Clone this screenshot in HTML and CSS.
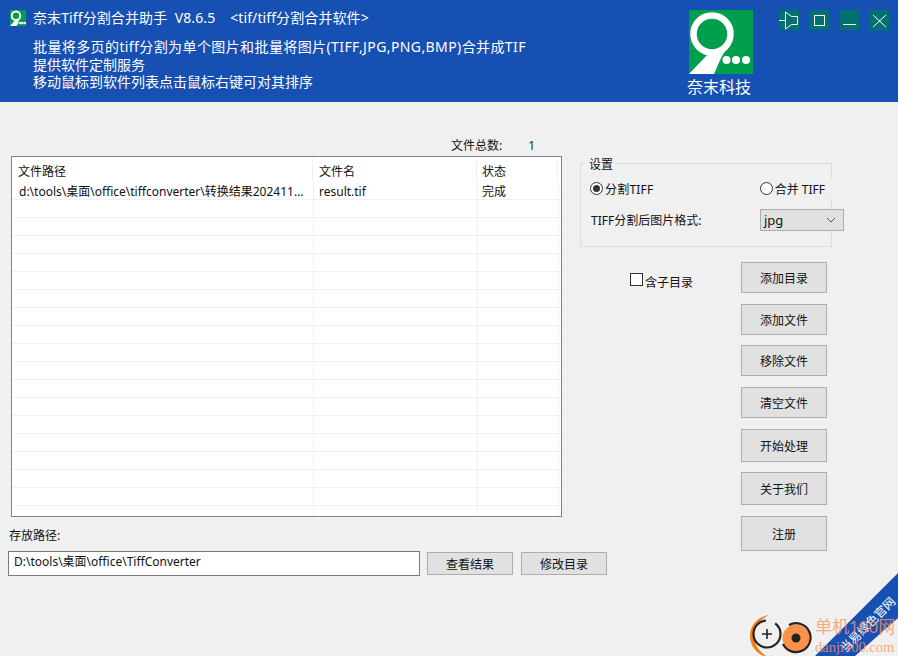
FILE: index.html
```html
<!DOCTYPE html>
<html lang="zh-CN">
<head>
<meta charset="utf-8">
<title>奈末Tiff分割合并助手</title>
<link rel="stylesheet" href="styles.css">
</head>
<body>
<div class="app">
  <header class="banner">
    <div class="intro">
      <div class="title-row">
        <svg class="app-icon" viewBox="0 0 64 64"><rect width="64" height="64" fill="#009e4d"/><circle cx="24" cy="23" r="17" fill="none" stroke="#fff" stroke-width="8"/><path d="M0 64 20 42 38 34 27 64Z" fill="#fff"/><circle cx="39" cy="52" r="5" fill="#fff"/><circle cx="49" cy="52" r="5" fill="#fff"/><circle cx="59" cy="52" r="5" fill="#fff"/></svg>
        <span class="title">奈末Tiff分割合并助手&nbsp; V8.6.5 &nbsp;&nbsp; &lt;tif/tiff分割合并软件&gt;</span>
      </div>
      <div class="desc">
        <div class="wide">批量将多页的tiff分割为单个图片和批量将图片(TIFF,JPG,PNG,BMP)合并成TIF</div>
        <div>提供软件定制服务</div>
        <div>移动鼠标到软件列表点击鼠标右键可对其排序</div>
      </div>
    </div>
    <div class="brand">
      <svg class="brand-logo" viewBox="0 0 64 64"><rect width="64" height="64" fill="#009e4d"/><circle cx="23" cy="24" r="18.500" fill="none" stroke="#fff" stroke-width="6.500"/><path d="M0 64 19 44 29 44 39 36 32 48 25 64Z" fill="#fff"/><circle cx="37.500" cy="50" r="4" fill="#fff"/><circle cx="47" cy="50" r="4" fill="#fff"/><circle cx="57" cy="50" r="4" fill="#fff"/></svg>
      <div class="brand-name">奈末科技</div>
    </div>
    <div class="win-controls">
      <span class="win-btn"><svg viewBox="0 0 20 20"><path d="M0 10.500H6M6.500 2V19M6.500 2 12.500 6.500H18.500V14.500H12.500L6.500 19" fill="none" stroke="#fff"/></svg></span>
      <span class="win-btn"><svg viewBox="0 0 20 20"><rect x="5.500" y="5.500" width="10" height="10" fill="none" stroke="#fff"/></svg></span>
      <span class="win-btn"><svg viewBox="0 0 20 20"><path d="M4 14.500H17" fill="none" stroke="#fff"/></svg></span>
      <span class="win-btn"><svg viewBox="0 0 20 20"><path d="M4 5 17 17M17 5 4 17" fill="none" stroke="#fff"/></svg></span>
    </div>
  </header>

  <main class="content">
    <section class="left">
      <div class="count-row"><span>文件总数:</span><span class="count">1</span></div>
      <div class="list">
        <div class="row head">
          <div class="c1">文件路径</div><div class="c2">文件名</div><div class="c3">状态</div>
        </div>
        <div class="row first">
          <div class="c1">d:\tools\桌面\office\tiffconverter\转换结果202411...</div><div class="c2">result.tif</div><div class="c3">完成</div>
        </div>
        <div class="row"><div class="c1"></div><div class="c2"></div><div class="c3"></div></div>
        <div class="row"><div class="c1"></div><div class="c2"></div><div class="c3"></div></div>
        <div class="row"><div class="c1"></div><div class="c2"></div><div class="c3"></div></div>
        <div class="row"><div class="c1"></div><div class="c2"></div><div class="c3"></div></div>
        <div class="row"><div class="c1"></div><div class="c2"></div><div class="c3"></div></div>
        <div class="row"><div class="c1"></div><div class="c2"></div><div class="c3"></div></div>
        <div class="row"><div class="c1"></div><div class="c2"></div><div class="c3"></div></div>
        <div class="row"><div class="c1"></div><div class="c2"></div><div class="c3"></div></div>
        <div class="row"><div class="c1"></div><div class="c2"></div><div class="c3"></div></div>
        <div class="row"><div class="c1"></div><div class="c2"></div><div class="c3"></div></div>
        <div class="row"><div class="c1"></div><div class="c2"></div><div class="c3"></div></div>
        <div class="row"><div class="c1"></div><div class="c2"></div><div class="c3"></div></div>
        <div class="row"><div class="c1"></div><div class="c2"></div><div class="c3"></div></div>
        <div class="row"><div class="c1"></div><div class="c2"></div><div class="c3"></div></div>
        <div class="row"><div class="c1"></div><div class="c2"></div><div class="c3"></div></div>
        <div class="row"><div class="c1"></div><div class="c2"></div><div class="c3"></div></div>
        <div class="row"><div class="c1"></div><div class="c2"></div><div class="c3"></div></div>
        <div class="row last"><div class="c1"></div><div class="c2"></div><div class="c3"></div></div>
      </div>
      <div class="path-label">存放路径:</div>
      <div class="path-row">
        <div class="path-input">D:\tools\桌面\office\TiffConverter</div>
        <div class="btn path-btn">查看结果</div>
        <div class="btn path-btn">修改目录</div>
      </div>
    </section>

    <section class="right">
      <div class="settings">
        <div class="legend">设置</div>
        <div class="radio-row">
          <label class="opt"><span class="radio on"></span><span class="opt-text">分割TIFF</span></label>
          <label class="opt opt-merge"><span class="radio"></span><span class="opt-text">合并 TIFF</span></label>
        </div>
        <div class="format-row">
          <span class="format-label">TIFF分割后图片格式:</span>
          <div class="select"><span>jpg</span><svg viewBox="0 0 10 6"><path d="M1 1 5 5 9 1" fill="none" stroke="#555"/></svg></div>
        </div>
      </div>
      <div class="actions">
        <label class="check-opt"><span class="check"></span><span class="check-text">含子目录</span></label>
        <div class="btn-col">
          <div class="btn">添加目录</div>
          <div class="btn tight">添加文件</div>
          <div class="btn">移除文件</div>
          <div class="btn">清空文件</div>
          <div class="btn tall tight">开始处理</div>
          <div class="btn tall">关于我们</div>
          <div class="btn reg">注册</div>
        </div>
      </div>
    </section>
  </main>

  <div class="watermark">
    <svg class="ribbon" viewBox="0 0 88 86"><path d="M88 3V48L45 86H5Z" fill="#1750b3"/></svg>
    <div class="ribbon-text">当易绿色官网</div>
    <svg class="wm-logo" viewBox="0 0 64 46"><path d="M20 2C8 4 1 13 1 23S8 42 20 45C12 40 5 33 5 23S12 6 20 2Z" fill="#f57c14"/><circle cx="18" cy="21" r="13.500" fill="none" stroke="#222" stroke-width="2.200" stroke-dasharray="62 10"/><path d="M13 21H23M18 16V26" stroke="#222" stroke-width="1.600"/><circle cx="47" cy="25" r="13.500" fill="#fb9248"/><path d="M40 12A14.500 14.500 0 1 1 34 31" fill="none" stroke="#222" stroke-width="2.200"/><circle cx="47" cy="25" r="4.500" fill="#222"/></svg>
    <div class="wm-text"><div class="wm-cn">单机100网</div><div class="wm-en">danji100.com</div></div>
  </div>
</div>
</body>
</html>
```
FILE: styles.css
```css
* { box-sizing: border-box; }
html, body { margin: 0; padding: 0; }
body {
  width: 898px;
  height: 656px;
  overflow: hidden;
  background: #f0f0f0;
  color: #111;
  font: 13px/18px "Noto Sans", "Noto Sans CJK SC", sans-serif;
}
.app { position: relative; width: 898px; height: 656px; overflow: hidden; }

.banner {
  height: 102px;
  background: #1750b3;
  color: #fff;
  display: flex;
  align-items: flex-start;
}
.intro { width: 678px; padding: 9px 0 0 10px; }
.title-row { display: flex; align-items: center; gap: 7px; height: 18px; }
.app-icon { width: 16px; height: 16px; }
.title { font-size: 14px; white-space: pre; letter-spacing: .1px; }
.desc { margin: 11px 0 0 23px; font-size: 14px; line-height: 17.5px; }
.wide { letter-spacing: .4px; }
.brand { width: 90px; padding: 10px 0 0 11px; }
.brand-logo { display: block; width: 64px; height: 64px; }
.brand-name { width: 64px; margin: 3px 0 0 -2px; font-size: 16px; line-height: 20px; white-space: nowrap; }
.win-controls { display: flex; gap: 10px; margin-top: 10px; margin-left: 11px; }
.win-btn { width: 20px; height: 20px; background: #007070; display: block; }
.win-btn svg { display: block; width: 20px; height: 20px; }

.content { display: flex; }
.left { width: 580px; padding-left: 8px; }
.count-row { display: flex; height: 54px; padding: 35px 0 0 443px; font-size: 12px; line-height: 18px; }
.count { margin-left: 26px; color: #0a3a1a; }
.list {
  width: 551px;
  height: 361px;
  margin-left: 3px;
  background: #fff;
  border: 1px solid #82828e;
  overflow: hidden;
}
.row { display: flex; flex: none; height: 18px; border-bottom: 1px solid #f0f0f0; font-size: 12px; line-height: 17px; }
.row.head { height: 25px; border-bottom: 0; line-height: 29px; }
.row.first { height: 18px; line-height: 19px; }
.row.last { border-bottom: 0; height: 16px; }
.c1, .c2, .c3 { flex: none; border-right: 1px solid #f0f0f0; white-space: nowrap; overflow: hidden; }
.c1 { width: 302px; padding-left: 7px; }
.c2 { width: 164px; padding-left: 5px; }
.c3 { width: 81px; padding-left: 4px; }
.head .c1 { width: 301px; padding-left: 6px; }
.head .c2 { padding-left: 6px; }
.head .c3 { padding-left: 5px; }
.path-label { margin-top: 9px; padding-left: 1px; height: 20px; font-size: 12px; line-height: 20px; }
.path-row { display: flex; align-items: center; margin-top: 5px; width: 599px; }
.path-input {
  flex: none;
  width: 412px;
  height: 25px;
  background: #fff;
  border: 1px solid #7a7a7a;
  padding: 0 0 0 5px;
  font-size: 12px;
  line-height: 20px;
}
.btn {
  background: #e1e1e1;
  border: 1px solid #adadad;
  display: flex;
  align-items: center;
  justify-content: center;
  font-size: 12px;
}
.path-btn { flex: none; width: 86px; height: 23px; margin-left: 7px; padding-top: 2px; }
.path-btn + .path-btn { margin-left: 8px; }

.right { width: 318px; }
.settings {
  position: relative;
  width: 252px;
  height: 84px;
  margin-top: 61px;
  border: 1px solid #dcdcdc;
  font-size: 12px;
}
.legend { position: absolute; left: 4px; top: -8px; padding: 0 4px; background: #f0f0f0; line-height: 18px; }
.radio-row { display: flex; justify-content: space-between; padding: 15px 0 0 9px; margin-right: -1px; height: 35px; }
.opt { display: flex; align-items: center; height: 19px; background: #f0f0f0; }
.opt-text { padding-top: 2px; letter-spacing: .2px; }
.opt-merge { padding-right: 7px; }
.opt-merge .opt-text { letter-spacing: 0; }
.radio {
  width: 13px; height: 13px; margin-right: 2px;
  border: 1px solid #333; border-radius: 50%; background: #fff;
  display: inline-flex; align-items: center; justify-content: center;
}
.radio.on::after { content: ""; width: 7px; height: 7px; border-radius: 50%; background: #333; }
.format-row { display: flex; justify-content: space-between; align-items: center; padding-left: 10px; height: 22px; margin-top: 10px; margin-right: -13px; }
.format-label { padding-top: 2px; }
.select {
  width: 84px; height: 22px;
  border: 1px solid #adadad; background: #e1e1e1;
  display: flex; align-items: center; justify-content: space-between;
  padding: 0 7px 0 3px;
  font-size: 13px;
}
.select svg { width: 10px; height: 6px; }
.actions { display: flex; margin-top: 15px; }
.check-opt { display: flex; align-items: center; width: 161px; height: 34px; padding-left: 50px; font-size: 12px; }
.check-text { padding-top: 7px; }
.check { width: 13px; height: 13px; margin-right: 2px; background: #fff; border: 1px solid #333; }
.btn-col { display: flex; flex-direction: column; }
.btn-col .btn { width: 86px; height: 31px; margin-bottom: 11px; padding-top: 2px; }
.btn-col .btn.tall { height: 33px; }
.btn-col .btn.tight { margin-bottom: 10px; }
.btn-col .btn.reg { height: 35px; margin-bottom: 0; }

.watermark { position: absolute; left: 0; top: 0; width: 898px; height: 656px; pointer-events: none; }
.ribbon { position: absolute; left: 810px; top: 570px; width: 88px; height: 86px; }
.ribbon-text {
  position: absolute; left: 826px; top: 617px; width: 84px; height: 16px;
  color: #fff; font-size: 12px; line-height: 16px; text-align: center; white-space: nowrap;
  transform: rotate(-45deg);
}
.wm-logo { position: absolute; left: 749px; top: 613px; width: 64px; height: 46px; }
.wm-text { position: absolute; left: 815px; top: 615px; color: rgba(255, 150, 90, .8); white-space: nowrap; }
.wm-cn { font-size: 17px; line-height: 24px; }
.wm-en { font-family: "Liberation Serif", serif; font-size: 14.500px; line-height: 16px; }
```
